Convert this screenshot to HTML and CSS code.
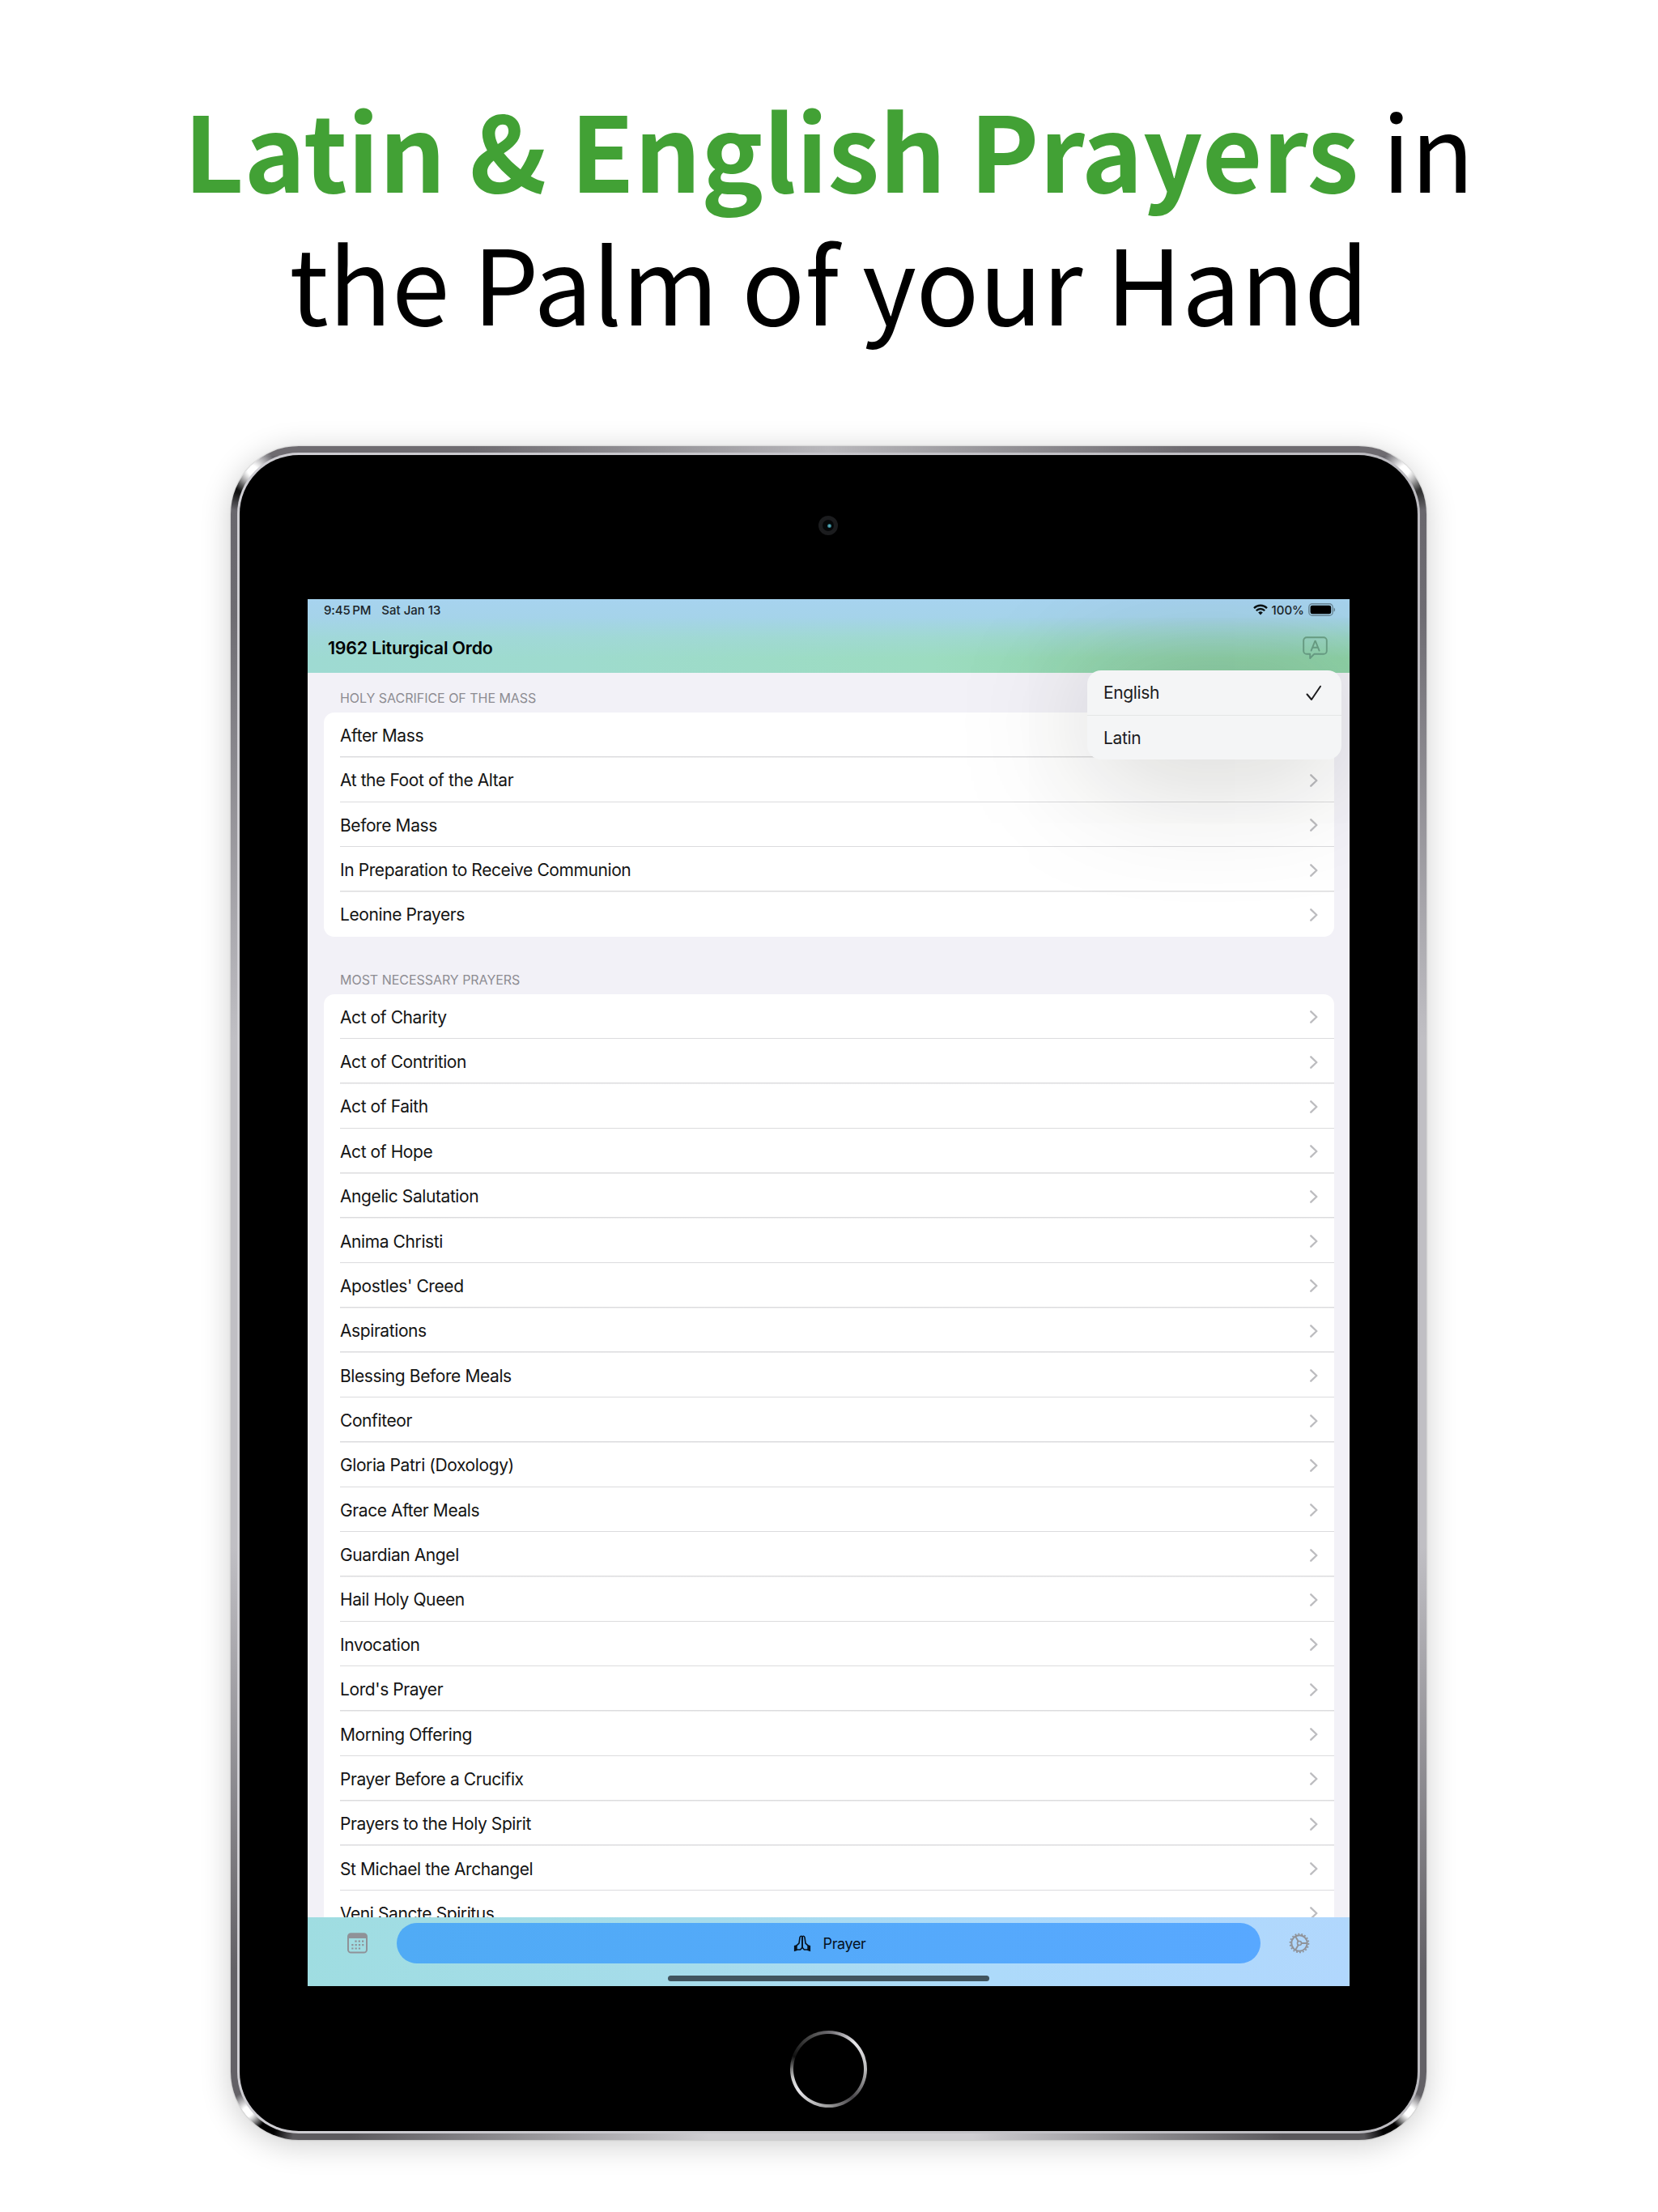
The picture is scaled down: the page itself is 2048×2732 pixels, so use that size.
FILE: index.html
```html
<!DOCTYPE html>
<html lang="en">
<head>
<meta charset="utf-8">
<title>1962 Liturgical Ordo</title>
<link rel="stylesheet" href="styles.css">
</head>
<body>
<svg class="defs" width="0" height="0" aria-hidden="true">
  <symbol id="chevron" viewBox="0 0 10 16"><path d="M1.3 1.3 L8.3 8 L1.3 14.7" fill="none" stroke="#bdbdc0" stroke-width="2.4" stroke-linecap="round" stroke-linejoin="round"/></symbol>
</svg>
<h1 class="headline"><span class="line line-1"><strong>Latin &amp; English Prayers</strong> in</span><span class="line line-2">the Palm of your Hand</span></h1>
<main class="tablet">
  <div class="rim">
    <div class="face">
      <div class="camera"><i></i></div>
      <div class="screen">
        <header class="topbar">
          <div class="status">
            <span class="time">9:45&#8201;PM</span><span class="date">Sat Jan 13</span>
            <svg class="wifi" width="18" height="14" viewBox="0 0 18 14"><g fill="none" stroke="#0b1214" stroke-width="2.3"><path d="M1 5.1a11.2 11.2 0 0 1 16 0"/><path d="M3.8 8.2a7.2 7.2 0 0 1 10.4 0"/></g><path d="M9 13.6 6.2 10.6a4 4 0 0 1 5.6 0z" fill="#0b1214"/></svg>
            <span class="pct">100%</span>
            <svg class="battery" width="34" height="16" viewBox="0 0 34 16"><rect x=".8" y=".8" width="29.4" height="14.4" rx="4.2" fill="none" stroke="#000" stroke-opacity=".36" stroke-width="1.4"/><rect x="2.6" y="2.7" width="25.6" height="10.6" rx="2.4"/><path d="M31.6 5.4v5.2c2-1 2-4.2 0-5.2z" fill-opacity=".4"/></svg>
          </div>
          <div class="navbar">
            <span class="title">1962 Liturgical Ordo</span>
            <svg class="bubble" width="31" height="29" viewBox="0 0 31 29"><path d="M5 1.2h21a3.8 3.8 0 0 1 3.8 3.8v13a3.8 3.8 0 0 1-3.8 3.8H14.2L9.2 27v-5.2H5A3.8 3.8 0 0 1 1.200 18V5A3.8 3.8 0 0 1 5 1.200z" /><path d="M10.600 17.600 15.300 5.800h.6l4.700 11.800M12.200 13.800h6.800"/></svg>
          </div>
        </header>
        <div class="content">
          <h2 class="label">HOLY SACRIFICE OF THE MASS</h2>
          <ul class="card" id="mass"></ul>
          <h2 class="label second">MOST NECESSARY PRAYERS</h2>
          <ul class="card" id="necessary"></ul>
        </div>
        <footer class="tabs">
          <svg class="calendar" width="25" height="26" viewBox="0 0 25 26"><rect x="1" y="1.200" width="23" height="23.400" rx="3.600" fill="none" stroke="#8f9298" stroke-width="2"/><path d="M1 7V4.500A3.500 3.500 0 0 1 4.500 1h16A3.500 3.500 0 0 1 24 4.500V7z" fill="#8f9298"/><path d="M9.400 10.700h11M5.300 15.100h15M5.300 19.500h11" stroke="#8f9298" stroke-width="2.200" stroke-dasharray="2.200 2.100"/></svg>
          <div class="pill">
            <svg class="pray" width="22" height="21" viewBox="0 0 22 21"><g fill="none" stroke="#06121e" stroke-width="1.600" stroke-linejoin="round" stroke-linecap="round"><path d="M11 2.400V15.200L8.600 18H4.200M4 12.800 7 10.200 8 2.900C8.500.6 10.700.8 11 2.400"/><path d="M11 2.400V15.200L13.400 18H17.800M18 12.800 15 10.200 14 2.900C13.500.6 11.300.8 11 2.400"/></g><path d="M.9 12.900 4.700 12.100V18.900L.9 20.200zM21.100 12.900 17.300 12.100V18.900L21.100 20.200z" fill="#06121e"/></svg>
            <span>Prayer</span>
          </div>
          <svg class="gear" width="26" height="26" viewBox="-13 -13 26 26"><g fill="none" stroke="#8f9298"><circle r="9.700" stroke-width="2"/><circle r="11.400" stroke-width="1.800" stroke-dasharray="1.900 2.079"/><circle r="2.500" stroke-width="1.600"/><path d="M2.500 0H9.500M-1.300-2.200-4.800-8.300M-1.300 2.200-4.800 8.300" stroke-width="1.900"/></g></svg>
          <i class="indicator"></i>
        </footer>
        <div class="menu">
          <div class="option">English<svg width="20" height="20" viewBox="0 0 20 20"><path d="M1.500 11.500 7 18 18 1.700" fill="none" stroke="#1c1c1e" stroke-width="2" stroke-linecap="round" stroke-linejoin="round"/></svg></div>
          <div class="option">Latin</div>
        </div>
      </div>
      <div class="home"></div>
    </div>
  </div>
</main>
<script src="lists.js"></script>
</body>
</html>
```
FILE: styles.css
```css
* { box-sizing: border-box; }
body { margin: 0; width: 2048px; height: 2732px; overflow: hidden; background: #fff; color: #000; font-family: Inter, sans-serif; }
.defs { position: absolute; }
.headline { margin: 0; padding-top: 100px; height: 551px; font: 400 128.700px/164px "Noto Sans CJK JP", sans-serif; text-align: center; }
.headline strong { font-weight: 700; color: #42a135; }
.line { display: block; white-space: nowrap; }
.tablet { width: 1477px; height: 2092px; margin-left: 285px; border-radius: 84px; padding: 8px;
  background:
    radial-gradient(circle at 27px 30px, #fff 0 6px, rgba(255,255,255,0) 30px),
    radial-gradient(circle at 1450px 30px, #fff 0 6px, rgba(255,255,255,0) 30px),
    radial-gradient(circle at 21px 2057px, #fff 0 6px, rgba(255,255,255,0) 24px),
    radial-gradient(circle at 1456px 2057px, #fff 0 6px, rgba(255,255,255,0) 24px),
    radial-gradient(circle at 10px 52px, #111 0 6px, rgba(0,0,0,0) 28px),
    radial-gradient(circle at 1467px 52px, #333 0 6px, rgba(0,0,0,0) 28px),
    radial-gradient(circle at 44px 2079px, #000 0 10px, rgba(0,0,0,0) 34px),
    radial-gradient(circle at 1433px 2079px, #000 0 10px, rgba(0,0,0,0) 34px),
    linear-gradient(90deg, #5c5a5e, #5c5a5e 10%, #cfced2 40%, #cfced2 62%, #59575b 88%) 0 100% / 100% 12px no-repeat,
    linear-gradient(90deg, #6e6b70, #6e6b70 20%, #b9b8bc 50%, #6e6b70 80%) 0 0 / 100% 12px no-repeat,
    linear-gradient(180deg, #66646a, #6e6c72 10%, #c0bfc4 35%, #c0bfc4 65%, #636166 90%);
  box-shadow: 0 0 2px rgba(0,0,0,.3), 0 6px 38px rgba(0,0,0,.2); }
.rim { height: 100%; padding: 3px; border-radius: 76px; background: linear-gradient(90deg, #cfced3, #bcbbc0); }
.face { height: 100%; background: #000; border-radius: 73px; display: flex; flex-direction: column; align-items: center; }
.camera { width: 24px; height: 24px; margin-top: 75px; margin-right: 2px; border-radius: 50%; background: #050708; border: 5px solid #1b1c1e; display: grid; place-items: center; }
.camera i { width: 5px; height: 5px; margin-left: 3px; border-radius: 50%; background: radial-gradient(#6cc4cf, #1a5a68 80%); }
.screen { position: relative; width: 1287px; height: 1713px; margin-top: 79px; overflow: hidden; background: #f2f1f7; display: flex; flex-direction: column; }
.topbar { height: 91px; flex: none; background: linear-gradient(180deg, #a7d3ef 0, #a5d3ea 24%, rgba(163,214,224,.5) 52%, rgba(158,218,208,0) 80%), linear-gradient(90deg, #9edad2 0, #9edbce 25%, #9cdcc0 60%, #94d7b0 76%, #8fd3a8); }
.status { display: flex; align-items: center; height: 26px; padding: 0 17px 0 20px; font-size: 15px; font-weight: 540; color: #1b2429; }
.time { letter-spacing: -.1px; }
.date { margin-left: 13px; margin-right: auto; }
.pct { margin: 0 5px 0 5px; }
.navbar { display: flex; justify-content: space-between; align-items: center; height: 65px; padding: 0 27px 0 25px; }
.title { font-size: 21.400px; font-weight: 600; letter-spacing: -.18px; margin-top: 2px; }
.bubble { fill: none; stroke: #6aa087; stroke-width: 1.900; stroke-linejoin: round; stroke-linecap: round; margin-top: 4px; }
.content { flex: 1; min-height: 0; overflow: hidden; padding: 0 19.500px 0 20px; }
.label { margin: 0; padding: 22px 20px 0; height: 49.300px; font-size: 16px; font-weight: 400; line-height: 19px; letter-spacing: -.03px; color: #8d8c92; }
.label.second { height: 71px; padding-top: 44px; }
.card { margin: 0; padding: 0; list-style: none; background: #fff; border-radius: 13px; overflow: hidden; }
.row { height: 55.370px; padding: 1px 20px 0 20px; display: flex; align-items: center; justify-content: space-between; font-size: 21px; letter-spacing: -.41px; color: #141414; background: linear-gradient(#dcdcde, #dcdcde) 20px 100% / 100% 1.500px no-repeat; }
.row:last-child { background: none; }
.row svg { width: 10px; height: 16px; }
.tabs { position: relative; flex: none; height: 85px; padding: 7px 49px 0 49px; display: flex; justify-content: space-between; align-items: flex-start; background: linear-gradient(100deg, #9fdde1 0, #a6dceb 38%, #addafa 66%, #b1d7fd 100%); }
.calendar, .gear { margin-top: 12px; }
.pill { width: 1067px; height: 50px; padding-left: 3px; border-radius: 25px; background: linear-gradient(90deg, #50abf5, #58a8ff); display: flex; align-items: center; justify-content: center; gap: 15px; font-size: 18px; letter-spacing: -.4px; color: #06121e; }
.indicator { position: absolute; left: 445px; bottom: 6px; width: 397px; height: 7px; border-radius: 4px; background: #40545e; }
.menu { position: absolute; left: 963px; top: 88px; width: 314px; height: 110px; border-radius: 17px; background: #f4f5f6; box-shadow: 0 10px 160px rgba(30,30,20,.25); }
.option { height: 55px; padding: 0 24px 0 20px; display: flex; align-items: center; justify-content: space-between; font-size: 21px; letter-spacing: -.35px; color: #1c1c1e; }
.option + .option { border-top: 1.500px solid #e4e6e6; }
.home { width: 95px; height: 95px; margin-top: 55px; margin-right: 1px; padding: 4px; border-radius: 50%; background: radial-gradient(circle, #000 43px, transparent 44px), conic-gradient(#6a686d, #e8e7eb 45deg, #bbb 90deg, #48464a 140deg, #999 180deg, #e8e7eb 235deg, #ccc 255deg, #111 290deg, #555 340deg, #6a686d); }
```
FILE: lists.js
```js
const lists = {
  mass: ["After Mass", "At the Foot of the Altar", "Before Mass", "In Preparation to Receive Communion", "Leonine Prayers"],
  necessary: ["Act of Charity", "Act of Contrition", "Act of Faith", "Act of Hope", "Angelic Salutation", "Anima Christi",
    "Apostles' Creed", "Aspirations", "Blessing Before Meals", "Confiteor", "Gloria Patri (Doxology)", "Grace After Meals",
    "Guardian Angel", "Hail Holy Queen", "Invocation", "Lord's Prayer", "Morning Offering", "Prayer Before a Crucifix",
    "Prayers to the Holy Spirit", "St Michael the Archangel", "Veni Sancte Spiritus"]
};
for (const [id, names] of Object.entries(lists)) {
  document.getElementById(id).innerHTML = names
    .map(n => `<li class="row"><span>${n}</span><svg><use href="#chevron"/></svg></li>`).join("");
}
```
